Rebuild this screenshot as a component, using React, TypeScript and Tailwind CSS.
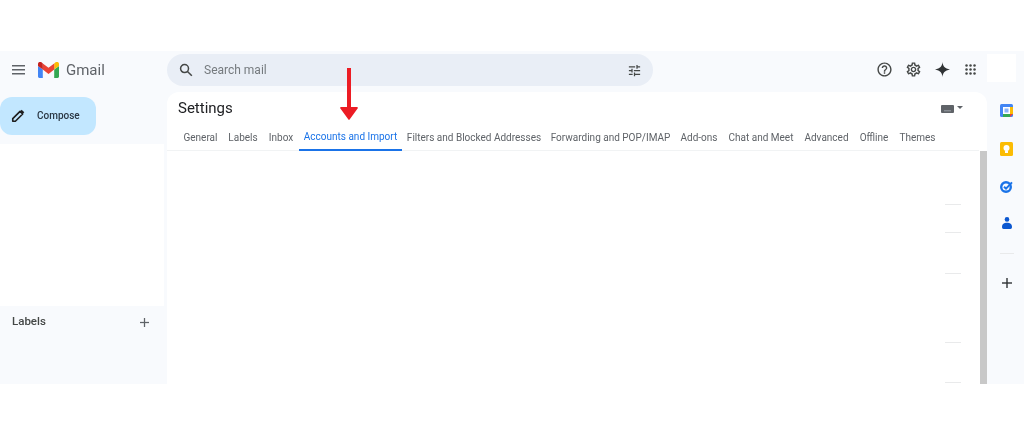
import React from "react";

const tabs = [
  { t: "General", w: "w-[45px]" },
  { t: "Labels", w: "w-[40px]" },
  { t: "Inbox", w: "w-[36px]" },
  { t: "Accounts and Import", w: "w-[103px]", active: true },
  { t: "Filters and Blocked Addresses", w: "w-[144px]" },
  { t: "Forwarding and POP/IMAP", w: "w-[129px]" },
  { t: "Add-ons", w: "w-[48px]" },
  { t: "Chat and Meet", w: "w-[76px]" },
  { t: "Advanced", w: "w-[55px]" },
  { t: "Offline", w: "w-[40px]" },
  { t: "Themes", w: "w-[47px]" },
];

function GmailLogo() {
  return (
    <svg width="21" height="16" viewBox="0 0 21 16">
      <path d="M1.4 16H4.8V7.6L0 4V14.6C0 15.4.6 16 1.4 16Z" fill="#4285f4" />
      <path d="M16.2 16H19.6C20.4 16 21 15.4 21 14.6V4L16.2 7.6Z" fill="#34a853" />
      <path d="M16.2 1.4V7.6L21 4V2C21 .2 18.9-.8 17.5.3Z" fill="#fbbc04" />
      <path d="M4.8 7.6V1.4L10.5 5.7 16.2 1.4V7.6L10.5 11.9Z" fill="#ea4335" />
      <path d="M0 2V4L4.8 7.6V1.4L3.5.3C2.1-.8 0 .2 0 2Z" fill="#c5221f" />
    </svg>
  );
}

function Hamburger() {
  return (
    <svg width="14" height="10" viewBox="0 0 14 10" fill="#5f6368">
      <rect width="13" height="1.5" y="0" />
      <rect width="13" height="1.5" y="4" />
      <rect width="13" height="1.5" y="8" />
    </svg>
  );
}

function SearchIcon() {
  return (
    <svg width="14" height="14" viewBox="0 0 24 24" fill="none" stroke="#444746" strokeWidth="2.6">
      <circle cx="9.5" cy="9.5" r="6.8" />
      <path d="M14.5 14.5 22 22" />
    </svg>
  );
}

function Sliders() {
  return (
    <svg width="15" height="15" viewBox="0 0 24 24" fill="#444746">
      <path d="M3 17v2h6v-2H3zM3 5v2h10V5H3zm10 16v-2h8v-2h-8v-2h-2v6h2zM7 9v2H3v2h4v2h2V9H7zm14 4v-2H11v2h10zm-6-4h2V7h4V5h-4V3h-2v6z" />
    </svg>
  );
}

function Help() {
  return (
    <svg width="17" height="17" viewBox="0 0 24 24" fill="#444746">
      <path d="M11 18h2v-2h-2v2zm1-16C6.48 2 2 6.48 2 12s4.48 10 10 10 10-4.48 10-10S17.52 2 12 2zm0 18c-4.41 0-8-3.59-8-8s3.59-8 8-8 8 3.59 8 8-3.59 8-8 8zm0-14c-2.21 0-4 1.79-4 4h2c0-1.1.9-2 2-2s2 .9 2 2c0 2-3 1.75-3 5h2c0-2.25 3-2.5 3-5 0-2.21-1.79-4-4-4z" />
    </svg>
  );
}

function Gear() {
  return (
    <svg width="17" height="17" viewBox="0 0 24 24" fill="#444746">
      <path d="M19.43 12.98c.04-.32.07-.64.07-.98s-.03-.66-.07-.98l2.11-1.65c.19-.15.24-.42.12-.64l-2-3.46c-.12-.22-.39-.3-.61-.22l-2.49 1c-.52-.4-1.08-.73-1.69-.98l-.38-2.65C14.46 2.18 14.25 2 14 2h-4c-.25 0-.46.18-.49.42l-.38 2.65c-.61.25-1.17.59-1.69.98l-2.49-1c-.23-.09-.49 0-.61.22l-2 3.46c-.13.22-.07.49.12.64l2.11 1.65c-.04.32-.07.65-.07.98s.03.66.07.98l-2.11 1.65c-.19.15-.24.42-.12.64l2 3.46c.12.22.39.3.61.22l2.49-1c.52.4 1.08.73 1.69.98l.38 2.65c.03.24.24.42.49.42h4c.25 0 .46-.18.49-.42l.38-2.65c.61-.25 1.17-.59 1.69-.98l2.49 1c.23.09.49 0 .61-.22l2-3.46c.12-.22.07-.49-.12-.64l-2.11-1.65zM17.45 11.27c.04.31.05.52.05.73s-.02.43-.05.73l-.14 1.13.89.7 1.08.84-.7 1.21-1.27-.51-1.04-.42-.9.68c-.43.32-.84.56-1.25.73l-1.06.43-.16 1.13-.2 1.35h-1.4l-.19-1.35-.16-1.13-1.06-.43c-.43-.18-.83-.41-1.23-.71l-.91-.7-1.06.43-1.27.51-.7-1.21 1.08-.84.89-.7-.14-1.13c-.03-.31-.05-.54-.05-.74s.02-.43.05-.73l.14-1.13-.89-.7-1.08-.84.7-1.21 1.27.51 1.04.42.9-.68c.43-.32.84-.56 1.25-.73l1.06-.43.16-1.13.2-1.35h1.39l.19 1.35.16 1.13 1.06.43c.43.18.83.41 1.23.71l.91.7 1.06-.43 1.27-.51.7 1.21-1.07.85-.89.7.14 1.13zM12 8c-2.21 0-4 1.79-4 4s1.79 4 4 4 4-1.79 4-4-1.79-4-4-4zm0 6c-1.1 0-2-.9-2-2s.9-2 2-2 2 .9 2 2-.9 2-2 2z" />
    </svg>
  );
}

function Spark() {
  return (
    <svg width="15" height="15" viewBox="0 0 24 24" fill="#303335">
      <path d="M12 0C12.6 6.4 15.6 10.6 24 12 15.6 13.4 12.6 17.6 12 24 11.4 17.6 8.4 13.4 0 12 8.4 10.6 11.4 6.4 12 0Z" />
    </svg>
  );
}

function Apps() {
  const pts = [1.5, 5.5, 9.5];
  return (
    <svg width="11" height="11" viewBox="0 0 11 11" fill="#444746">
      {pts.map((y) => pts.map((x) => <circle key={`${x}-${y}`} cx={x} cy={y} r="1.25" />))}
    </svg>
  );
}

function Pencil() {
  return (
    <svg width="14" height="14" viewBox="0 0 24 24" fill="none" stroke="#1f1f1f" strokeWidth="2.8" strokeLinejoin="round">
      <path d="M3 21v-4.5L15.5 4l4.5 4.5L7.5 21H3Z" />
      <path d="M17 2.5l4.5 4.5" strokeWidth="3.6" />
    </svg>
  );
}

function Keyboard() {
  return (
    <svg width="13" height="8" viewBox="0 0 13 8">
      <rect width="13" height="8" rx="1" fill="#5f6368" />
      <rect x="3" y="5.3" width="7" height="1" fill="#9aa0a6" />
    </svg>
  );
}

function Calendar() {
  return (
    <svg width="13" height="13" viewBox="0 0 13 13">
      <rect width="13" height="13" rx="1.5" fill="#4285f4" />
      <rect x="10" y="3" width="3" height="7" fill="#fbbc04" />
      <rect x="3" y="10" width="7" height="3" fill="#34a853" />
      <path d="M10 10h3l-3 3Z" fill="#ea4335" />
      <rect x="3" y="3" width="7" height="7" fill="#ffffff" />
      <rect x="4.5" y="4.5" width="4" height="4" fill="#8ab4f8" />
    </svg>
  );
}

function Keep() {
  return (
    <svg width="13" height="14" viewBox="0 0 13 14">
      <rect width="13" height="14" rx="1.5" fill="#fbbc04" />
      <circle cx="6.5" cy="6" r="3" fill="#ffffff" />
      <rect x="5" y="8.5" width="3" height="2.5" fill="#ffffff" />
    </svg>
  );
}

function Tasks() {
  return (
    <svg width="13" height="13" viewBox="0 0 13 13" fill="none">
      <circle cx="6" cy="7" r="4.8" stroke="#1a73e8" strokeWidth="2.4" />
      <path d="M4 6.8 6 8.6 12 2.4" stroke="#1a73e8" strokeWidth="2" />
    </svg>
  );
}

function Contacts() {
  return (
    <svg width="10" height="12" viewBox="0 0 10 12" fill="#0b57d0">
      <circle cx="5" cy="2.4" r="2.3" />
      <path d="M0 10c0-3 2.2-4.2 5-4.2S10 7 10 10c0 1.2-.6 2-1.6 2H1.6C.6 12 0 11.2 0 10Z" />
    </svg>
  );
}

function Plus({ size, color }: { size: number; color: string }) {
  return (
    <svg width={size} height={size} viewBox="0 0 10 10" fill={color}>
      <rect x="4.3" width="1.4" height="10" />
      <rect y="4.3" width="10" height="1.4" />
    </svg>
  );
}

function Arrow() {
  return (
    <svg width="18" height="53" viewBox="0 0 18 53" fill="#ec1c24">
      <rect x="7" width="4" height="42" />
      <path d="M1 39H17C17.8 39 18.2 40 17.6 40.6L9.6 51.6C9.2 52.1 8.8 52.1 8.4 51.6L.4 40.6C-.2 40 .2 39 1 39Z" />
    </svg>
  );
}

export default function App() {
  return (
    <div className="relative h-[435px] w-[1024px] overflow-hidden bg-white pt-[51px] font-['Roboto',sans-serif] blur-[0.5px]">
      <div className="flex h-[333px] flex-col overflow-hidden bg-[#f8fafd]">
        <header className="flex h-[41px] shrink-0 items-start">
          <div className="flex w-[167px] shrink-0 items-center pl-[12px] pt-[10px]">
            <Hamburger />
            <div className="ml-[12px]"><GmailLogo /></div>
            <span className="ml-[7px] text-[15px] leading-[18px] text-[#5f6368]">Gmail</span>
          </div>
          <div className="mt-[3px] flex h-[32px] w-[486px] shrink-0 items-center rounded-[16px] bg-[#e9eef6] pl-[12px] pr-[11px]">
            <SearchIcon />
            <span className="ml-[11px] text-[12px] text-[#757a7e]">Search mail</span>
            <div className="ml-auto flex"><Sliders /></div>
          </div>
          <div className="flex grow items-center pt-[10px]">
            <div className="ml-[223px]"><Help /></div>
            <div className="ml-[12px]"><Gear /></div>
            <div className="ml-[13px]"><Spark /></div>
            <div className="ml-[15px]"><Apps /></div>
          </div>
          <div className="mr-[8px] mt-[3px] h-[28px] w-[29px] shrink-0 bg-white" />
        </header>

        <div className="flex min-h-0 grow">
          <aside className="flex w-[167px] shrink-0 flex-col">
            <div className="flex h-[52px] shrink-0 items-start">
              <div className="mt-[5px] flex h-[38px] w-[96px] items-center rounded-[12px] bg-[#c2e7ff] pb-[1px] pl-[11px]">
                <Pencil />
                <span className="ml-[12px] text-[10px] font-medium text-[#2a3744]">Compose</span>
              </div>
            </div>
            <div className="h-[162px] w-[164px] shrink-0 bg-white" />
            <div className="flex h-[30px] w-[149px] shrink-0 items-center justify-between pl-[12px] pt-[2px]">
              <span className="text-[11.5px] font-medium text-[#444746]">Labels</span>
              <Plus size={9} color="#5f6368" />
            </div>
          </aside>

          <main className="flex w-[820px] shrink-0 flex-col rounded-t-[12px] bg-white">
            <div className="flex h-[32px] shrink-0 items-center justify-between pl-[11px] pr-[24px]">
              <span className="text-[15px] text-[#202124]">Settings</span>
              <div className="flex items-center gap-[3px] pt-[2px]">
                <Keyboard />
                <div className="mb-[3px] h-0 w-0 border-x-[3px] border-t-[3px] border-x-transparent border-t-[#5f6368]" />
              </div>
            </div>
            <nav className="flex h-[27px] w-[812px] shrink-0 items-stretch border-b border-[#f1f3f4] pl-[11px]">
              {tabs.map((tab) => (
                <div
                  key={tab.t}
                  className={`flex h-[27px] shrink-0 items-center justify-center whitespace-nowrap text-[10px] ${tab.w} ${
                    tab.active ? "border-b-2 border-[#1a73e8] text-[#1a73e8]" : "text-[#5f6368]"
                  }`}
                >
                  {tab.t}
                </div>
              ))}
            </nav>
            <div className="flex min-h-0 grow justify-end">
              <div className="flex w-[16px] flex-col pt-[53px]">
                <div className="h-px bg-[#e9eaeb]" />
                <div className="mt-[27px] h-px bg-[#e9eaeb]" />
                <div className="mt-[40px] h-px bg-[#e9eaeb]" />
                <div className="mt-[68px] h-px bg-[#e9eaeb]" />
                <div className="mt-[39px] h-px bg-[#e9eaeb]" />
              </div>
              <div className="ml-[19px] w-[7px] bg-[#c8c8c8]" />
            </div>
          </main>

          <aside className="relative -mt-[41px] w-[37px] shrink-0">
            <div className="flex flex-col items-center pl-[2px] pt-[53px]">
              <div className="h-[13px]"><Calendar /></div>
              <div className="mt-[25px] h-[14px]"><Keep /></div>
              <div className="mt-[24px] h-[13px]"><Tasks /></div>
              <div className="mt-[24px] h-[12px]"><Contacts /></div>
              <div className="mt-[24px] h-px w-[14px] bg-[#e9eaeb]" />
              <div className="mt-[24px]"><Plus size={10} color="#303335" /></div>
            </div>
          </aside>
        </div>
      </div>
      <div className="absolute left-[340px] top-[68px]"><Arrow /></div>
    </div>
  );
}
